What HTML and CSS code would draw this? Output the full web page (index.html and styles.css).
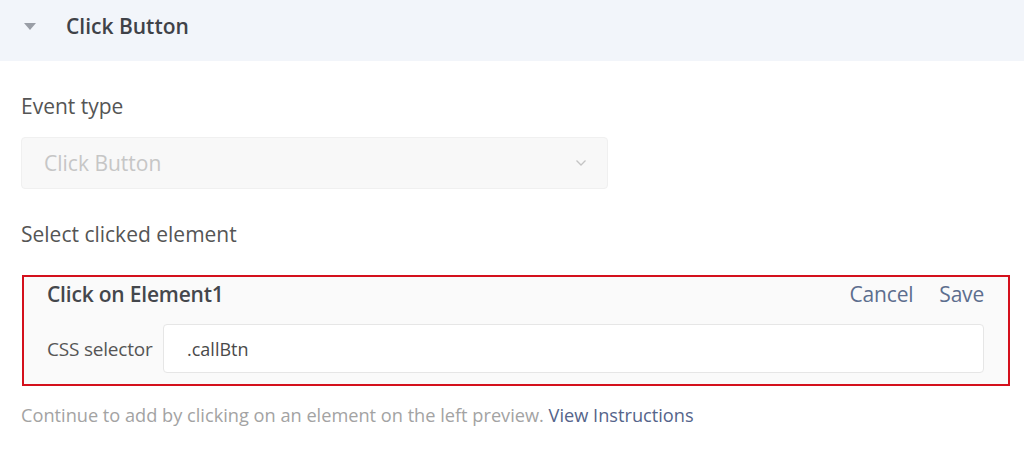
FILE: index.html
```html
<!DOCTYPE html>
<html>
<head>
<meta charset="utf-8">
<link rel="stylesheet" href="styles.css">
</head>
<body>
<div class="header">
  <span class="caret"></span>
  <span class="header-title">Click Button</span>
</div>
<div class="content">
  <div class="label label-first">Event type</div>
  <div class="select">
    <span class="select-text">Click Button</span>
    <svg class="chevron" width="12" height="8" viewBox="0 0 12 8"><path d="M1.5 1.5 L6 6 L10.5 1.5" fill="none" stroke="#c4c4c4" stroke-width="1.3"/></svg>
  </div>
  <div class="label label-second">Select clicked element</div>
  <div class="element-box">
    <div class="box-head">
      <span class="box-title">Click on Element1</span>
      <div class="actions">
        <span class="action">Cancel</span>
        <span class="action">Save</span>
      </div>
    </div>
    <div class="box-row">
      <span class="row-label">CSS selector</span>
      <div class="input">.callBtn</div>
    </div>
  </div>
  <div class="hint">Continue to add by clicking on an element on the left preview. <span class="link">View Instructions</span></div>
</div>
</body>
</html>
```
FILE: styles.css
```css
* { box-sizing: border-box; }
body {
  margin: 0;
  background: #ffffff;
  font-family: "Open Sans", "Noto Sans", sans-serif;
  color: #4a4a4a;
}
.header {
  height: 61px;
  background: #f2f5fa;
  display: flex;
  align-items: center;
  padding-left: 24px;
  padding-bottom: 10px;
}
.caret {
  width: 0;
  height: 0;
  border-left: 6px solid transparent;
  border-right: 6px solid transparent;
  border-top: 7px solid #9a9ea6;
  margin-top: 2px;
}
.header-title {
  margin-left: 30px;
  font-size: 21px;
  font-weight: 600;
  color: #3f4248;
}
.content {
  padding: 0 21px;
}
.label {
  font-size: 21px;
  color: #555555;
  line-height: 26px;
}
.label-first { margin-top: 32px; }
.select {
  margin-top: 18px;
  width: 587px;
  height: 52px;
  background: #f8f8f8;
  border: 1px solid #f0f0f0;
  border-radius: 4px;
  display: flex;
  align-items: center;
  justify-content: space-between;
  padding: 0 20px 0 22px;
}
.select-text {
  font-size: 21px;
  color: #c6c6c6;
}
.label-second { margin-top: 32px; }
.element-box {
  margin-top: 28px;
  margin-left: 1px;
  width: 988px;
  height: 111px;
  border: 2px solid #d4101c;
  background: #fafafa;
  padding: 0 24px 0 23px;
}
.box-head {
  height: 34px;
  display: flex;
  align-items: center;
  justify-content: space-between;
}
.box-title {
  font-size: 21px;
  font-weight: 600;
  color: #44474c;
  letter-spacing: -0.2px;
}
.actions {
  display: flex;
  gap: 26px;
}
.action {
  font-size: 21px;
  color: #5d6e8e;
  letter-spacing: -0.2px;
}
.box-row {
  margin-top: 13px;
  display: flex;
  align-items: center;
}
.row-label {
  width: 116px;
  font-size: 19px;
  color: #555;
  letter-spacing: -0.2px;
}
.input {
  flex: 1;
  height: 49px;
  background: #ffffff;
  border: 1px solid #e6e6e6;
  border-radius: 4px;
  display: flex;
  align-items: center;
  padding-left: 23px;
  font-size: 18px;
  color: #4a4a4a;
}
.hint {
  margin-top: 17px;
  font-size: 18.2px;
  line-height: 24px;
  color: #a3a3a3;
}
.link {
  color: #55648a;
}
```
